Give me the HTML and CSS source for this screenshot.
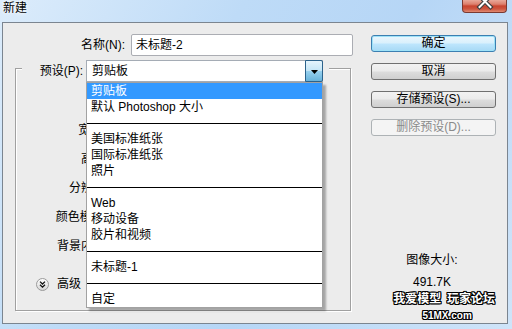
FILE: index.html
```html
<!DOCTYPE html>
<html lang="zh-CN">
<head>
  <meta charset="UTF-8" />
  <title>新建</title>
  <link rel="stylesheet" href="styles.css">
</head>
<body>
  <div class="window">
    <div class="titlebar">
      <span class="title">新建</span>
      <span class="close">
        <svg width="45" height="13" viewBox="0 0 45 13">
          <path d="M17.5 -3 L28.5 8 M28.5 -3 L17.5 8" stroke="#3d3d3d" stroke-width="4.2" stroke-linecap="square" fill="none"/>
          <path d="M17.5 -3 L28.5 8 M28.5 -3 L17.5 8" stroke="#ffffff" stroke-width="2" stroke-linecap="square" fill="none"/>
        </svg>
      </span>
    </div>

    <div class="client">
      <div class="main">
        <div class="name-row">
          <label class="lbl">名称(N):</label>
          <div class="textbox">未标题-2</div>
        </div>

        <div class="groupbox">
          <div class="preset-row">
            <label class="preset-lbl">预设(P):</label>
            <div class="combo">
              <span class="combo-text">剪贴板</span>
              <span class="combo-btn">
                <svg width="7" height="4" viewBox="0 0 7 4"><polygon points="0,0 7,0 3.5,4" fill="#000"/></svg>
              </span>
              <ul class="droplist">
                <li class="sel">剪贴板</li>
                <li>默认 Photoshop 大小</li>
                <li class="sep"></li>
                <li>美国标准纸张</li>
                <li>国际标准纸张</li>
                <li>照片</li>
                <li class="sep"></li>
                <li>Web</li>
                <li>移动设备</li>
                <li>胶片和视频</li>
                <li class="sep"></li>
                <li>未标题-1</li>
                <li class="sep"></li>
                <li>自定</li>
              </ul>
            </div>
          </div>

          <!-- the rest of each row lies under the open list -->
          <div class="fields">
            <div class="field disabled"><span class="field-lbl">大小(I):</span></div>
            <div class="field"><span class="field-lbl">宽度(W):</span></div>
            <div class="field"><span class="field-lbl">高度(H):</span></div>
            <div class="field"><span class="field-lbl">分辨率(R):</span></div>
            <div class="field"><span class="field-lbl">颜色模式(M):</span></div>
            <div class="field"><span class="field-lbl">背景内容(C):</span></div>
          </div>

          <div class="advanced">
            <span class="adv-icon">
              <svg width="13" height="13" viewBox="0 0 13 13">
                <defs>
                  <linearGradient id="advg" x1="0" y1="0" x2="0" y2="1">
                    <stop offset="0" stop-color="#ffffff"/>
                    <stop offset="1" stop-color="#d6d6d6"/>
                  </linearGradient>
                </defs>
                <circle cx="6.5" cy="6.5" r="6" fill="url(#advg)" stroke="#9a9a9a"/>
                <path d="M4 3.6 L6.5 6 L9 3.6 M4 6.8 L6.5 9.2 L9 6.8" stroke="#111" stroke-width="1.3" fill="none"/>
              </svg>
            </span>
            <span>高级</span>
          </div>
        </div>
      </div>

      <div class="side">
        <button class="btn default">确定</button>
        <button class="btn">取消</button>
        <button class="btn">存储预设(S)...</button>
        <button class="btn" disabled>删除预设(D)...</button>
        <div class="info">
          <div>图像大小:</div>
          <div class="info-size">491.7K</div>
        </div>
      </div>
    </div>

    <div class="watermark">
      <div>我爱模型 玩家论坛</div>
      <div class="wm-url">51MX.com</div>
    </div>
  </div>
</body>
</html>
```

FILE: styles.css
```css
body {
  margin: 0;
  width: 512px;
  height: 329px;
  overflow: hidden;
  font-family: "Liberation Sans", "Noto Sans CJK SC", sans-serif;
  font-size: 12px;
  line-height: 16px;
  color: #000;
  background: linear-gradient(120deg, #dcecfb 0%, #bedbf7 35%, #b6d6f6 60%, #cfe4f9 100%);
}

.window {
  position: relative;
  height: 329px;
  display: flex;
  flex-direction: column;
}

.titlebar {
  height: 22px;
  display: flex;
  justify-content: space-between;
  align-items: flex-start;
}

.title {
  padding-left: 3px;
  line-height: 16px;
  text-shadow: 0 0 5px #fff, 0 0 3px #fff;
}

.close {
  width: 45px;
  height: 13px;
  margin-right: 5px;
  box-sizing: border-box;
  border: 1px solid #7a3a32;
  border-top: none;
  border-radius: 0 0 4px 4px;
  background: linear-gradient(#e9a899 0%, #dd7f6d 35%, #c9442f 50%, #cd5640 75%, #e08b73 100%);
  overflow: hidden;
}

.close svg {
  display: block;
  margin: -1px 0 0 -1px;
}

.client {
  margin: 0 4px 0 2px;
  height: 302px;
  box-sizing: border-box;
  border: 1px solid #7b8590;
  background-color: #ececec;
  display: flex;
  padding-top: 11px;
}

.main {
  width: 350px;
  display: flex;
  flex-direction: column;
}

.name-row {
  display: flex;
  align-items: center;
  height: 22px;
}

.lbl {
  width: 122px;
  margin-right: 6px;
  text-align: right;
}

.textbox {
  width: 222px;
  height: 22px;
  box-sizing: border-box;
  border: 1px solid #abadb3;
  border-radius: 2px;
  background: #fff;
  padding-left: 4px;
  line-height: 20px;
}

.groupbox {
  margin: 12px 0 0 12px;
  width: 336px;
  height: 243px;
  box-sizing: border-box;
  border: 1px solid #a0a0a0;
  box-shadow: inset 1px 1px 0 #fff, 1px 1px 0 #fff;
  display: flex;
  flex-direction: column;
}

.preset-row {
  margin: -9px 0 0 6px;
  align-self: flex-start;
  display: flex;
  align-items: center;
  height: 22px;
  padding-right: 6px;
  background-color: #ececec;
}

.preset-lbl {
  width: 61px;
  margin-right: 3px;
  text-align: right;
}

.combo {
  position: relative;
  width: 237px;
  height: 22px;
  box-sizing: border-box;
  border: 1px solid #a5acb5;
  background: #fff;
  display: flex;
}

.combo-text {
  flex: 1;
  padding-left: 5px;
  line-height: 20px;
}

.combo-btn {
  width: 18px;
  height: 22px;
  margin: -1px -1px 0 0;
  box-sizing: border-box;
  border: 1px solid #2c628b;
  border-radius: 0 2px 2px 0;
  background: linear-gradient(#e5f4fc 0%, #c4e5f6 48%, #98d1ef 50%, #68b3db 100%);
  display: flex;
  align-items: center;
  justify-content: center;
}

.combo-btn svg {
  display: block;
  margin-top: 1px;
}

.droplist {
  position: absolute;
  top: 21px;
  left: -1px;
  width: 237px;
  box-sizing: border-box;
  margin: 0;
  padding: 0;
  list-style: none;
  background: #fff;
  border: 1px solid #a2a2a2;
  box-shadow: 3px 3px 2px rgba(0, 0, 0, 0.3);
  z-index: 5;
}

.droplist li {
  height: 16px;
  line-height: 16px;
  padding-left: 4px;
  white-space: nowrap;
}

.droplist li.sel {
  background-color: #3399ff;
  color: #fff;
}

.droplist li.sep {
  background: linear-gradient(#000, #000) no-repeat 0 8px / 100% 1px;
}

.fields {
  margin-top: 8px;
  display: flex;
  flex-direction: column;
  gap: 7px;
}

.field {
  height: 22px;
  display: flex;
  align-items: center;
}

.field-lbl {
  width: 109px;
  text-align: right;
  white-space: nowrap;
}

.field.disabled {
  color: #8d8d8d;
}

.advanced {
  margin-top: 16px;
  height: 22px;
  display: flex;
  align-items: center;
  padding-left: 20px;
}

.adv-icon {
  width: 13px;
  height: 13px;
  margin-right: 8px;
}

.adv-icon svg {
  display: block;
}

.side {
  margin-left: 18px;
  width: 125px;
  padding-top: 1px;
  display: flex;
  flex-direction: column;
  gap: 11px;
}

.btn {
  height: 17px;
  padding: 0;
  box-sizing: border-box;
  border: 1px solid #707070;
  border-radius: 3px;
  background: linear-gradient(#f2f2f2 0%, #ebebeb 48%, #dddddd 52%, #cfcfcf 100%);
  font-family: "Liberation Sans", "Noto Sans CJK SC", sans-serif;
  font-size: 12px;
  line-height: 15px;
  color: #000;
  text-align: center;
}

.btn.default {
  border-color: #3c7fb1;
  background: linear-gradient(#eaf6fd 0%, #d9f0fc 48%, #bee6fd 52%, #a7d9f5 100%);
  box-shadow: inset 0 0 0 1px #9ee2f8;
}

.btn:disabled {
  border-color: #adb2b5;
  background: #f4f4f4;
  color: #8a8a8a;
}

.info {
  margin-top: 105px;
  text-align: center;
  padding-right: 3px;
}

.info-size {
  margin-top: 6px;
}

.watermark {
  position: absolute;
  right: 17px;
  top: 290px;
  text-align: center;
  font-family: "Noto Sans CJK SC", sans-serif;
  font-weight: bold;
  font-size: 12px;
  line-height: 16px;
  color: #fff;
  text-shadow: 1px 0 0 #000, -1px 0 0 #000, 0 1px 0 #000, 0 -1px 0 #000,
    1px 1px 0 #000, -1px -1px 0 #000, 1px -1px 0 #000, -1px 1px 0 #000;
  word-spacing: 3px;
}

.wm-url {
  margin-top: 2px;
  padding-left: 6px;
  font-family: "Liberation Sans", sans-serif;
  font-size: 10px;
}
```
